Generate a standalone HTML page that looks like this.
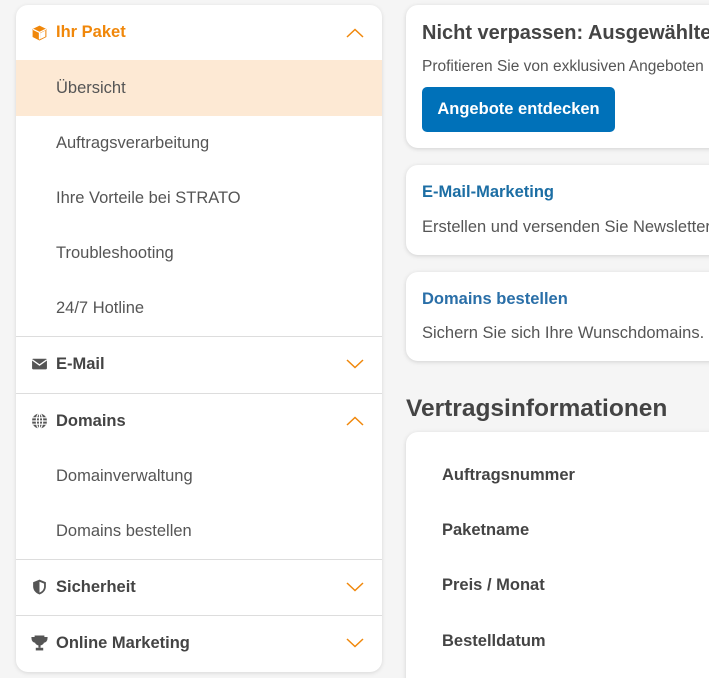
<!DOCTYPE html>
<html><head><meta charset="utf-8"><style>
*{box-sizing:border-box;margin:0;padding:0}
html,body{width:709px;height:678px;overflow:hidden}
body{background:#f5f5f5;font-family:"Liberation Sans",sans-serif;color:#444;position:relative}
#wrap{position:absolute;left:0;top:0;width:709px;height:678px;overflow:hidden}
.side{position:absolute;left:16px;top:5px;width:366px;height:667px;background:#fff;border-radius:12px;box-shadow:0 1px 4px rgba(0,0,0,.12);overflow:hidden}
.row{position:absolute;left:0;width:366px;font-size:16.5px;display:flex;align-items:center}
.h{font-weight:bold;color:#444;height:56px}
.sub{padding-left:40px;height:55px;color:#555}
.ic{position:absolute;left:15px;top:50%;transform:translateY(-50%);width:17px;height:17px}
.h span{margin-left:40px}
.chev{position:absolute;right:18px;top:50%;width:18px;height:10px;transform:translateY(-50%)}
.div{position:absolute;left:0;width:366px;height:1px;background:#ddd}
.card{position:absolute;left:406px;width:320px;background:#fff;border-radius:12px;box-shadow:0 1px 5px rgba(0,0,0,.15)}
.t{position:absolute;left:16px;white-space:nowrap}
</style></head><body><div id="wrap">
<div class="side">
 <div class="row h" style="top:0;height:55px;color:#f0870a">
  <svg class="ic" viewBox="0 0 16 16"><path d="M8 1 L14.5 4.2 V11.8 L8 15 L1.5 11.8 V4.2Z" fill="#f0870a"/><path d="M8 7.5 V14 M2 4.5 L8 7.5 L14 4.5" stroke="#fff" stroke-width="1.2" fill="none"/><path d="M8.6 8.2 L13.5 5.8 V11.4 L8.6 13.8Z" fill="#fff"/></svg>
  <span>Ihr Paket</span>
  <svg class="chev" viewBox="0 0 18 10"><path d="M1 9 L9 1.5 L17 9" stroke="#f0870a" stroke-width="1.5" fill="none"/></svg>
 </div>
 <div class="row sub" style="top:55px;height:56px;background:#fde9d4">Übersicht</div>
 <div class="row sub" style="top:111px">Auftragsverarbeitung</div>
 <div class="row sub" style="top:166px">Ihre Vorteile bei STRATO</div>
 <div class="row sub" style="top:221px">Troubleshooting</div>
 <div class="row sub" style="top:276px">24/7 Hotline</div>
 <div class="div" style="top:331px"></div>
 <div class="row h" style="top:331px">
  <svg class="ic" viewBox="0 0 16 16"><rect x="1" y="3" width="14" height="10" rx="1" fill="#555"/><path d="M1 4 L8 9 L15 4" stroke="#fff" stroke-width="1.3" fill="none"/></svg>
  <span>E-Mail</span>
  <svg class="chev" viewBox="0 0 18 10"><path d="M1 1 L9 8.5 L17 1" stroke="#f0870a" stroke-width="1.5" fill="none"/></svg>
 </div>
 <div class="div" style="top:388px"></div>
 <div class="row h" style="top:388px">
  <svg class="ic" viewBox="0 0 16 16"><circle cx="8" cy="8" r="7" fill="#555"/><path d="M1 8 H15 M1.8 5 H14.2 M1.8 11 H14.2 M8 1 V15" stroke="#fff" stroke-width="1.1"/><ellipse cx="8" cy="8" rx="3" ry="7" stroke="#fff" stroke-width="1.1" fill="none"/></svg>
  <span>Domains</span>
  <svg class="chev" viewBox="0 0 18 10"><path d="M1 9 L9 1.5 L17 9" stroke="#f0870a" stroke-width="1.5" fill="none"/></svg>
 </div>
 <div class="row sub" style="top:444px">Domainverwaltung</div>
 <div class="row sub" style="top:499px">Domains bestellen</div>
 <div class="div" style="top:554px"></div>
 <div class="row h" style="top:554px">
  <svg class="ic" viewBox="0 0 16 16"><path d="M8 1 L14 3.5 V7.5 C14 11 11.5 13.8 8 15 C4.5 13.8 2 11 2 7.5 V3.5Z" fill="#555"/><path d="M8 3 L12.3 4.8 V7.5 C12.3 10 10.7 12.2 8 13.2Z" fill="#fff"/></svg>
  <span>Sicherheit</span>
  <svg class="chev" viewBox="0 0 18 10"><path d="M1 1 L9 8.5 L17 1" stroke="#f0870a" stroke-width="1.5" fill="none"/></svg>
 </div>
 <div class="div" style="top:610px"></div>
 <div class="row h" style="top:610px">
  <svg class="ic" viewBox="0 0 16 16"><path d="M4 1.5 H12 V6 C12 8.5 10 9.8 8 9.8 C6 9.8 4 8.5 4 6Z M4 3 H1 C1 6 2.5 7 4.5 7.3 M12 3 H15 C15 6 13.5 7 11.5 7.3" fill="#555" stroke="#555" stroke-width="1.2"/><rect x="7" y="9.5" width="2" height="3" fill="#555"/><rect x="4.5" y="12.5" width="7" height="2.5" fill="#555"/></svg>
  <span>Online Marketing</span>
  <svg class="chev" viewBox="0 0 18 10"><path d="M1 1 L9 8.5 L17 1" stroke="#f0870a" stroke-width="1.5" fill="none"/></svg>
 </div>
</div>

<div class="card" style="top:5px;height:143px">
 <div class="t" style="top:17px;font-size:20px;font-weight:bold;color:#444">Nicht verpassen: Ausgewählte Angebote</div>
 <div class="t" style="top:53px;font-size:15.5px;color:#555">Profitieren Sie von exklusiven Angeboten</div>
 <div style="position:absolute;left:16px;top:82px;width:193px;height:45px;background:#0071b9;border-radius:5px;color:#fff;font-weight:bold;font-size:16.5px;line-height:45px;text-align:center">Angebote entdecken</div>
</div>
<div class="card" style="top:165px;height:90px">
 <div class="t" style="top:18px;font-size:16.5px;font-weight:bold;color:#1c6ea4">E-Mail-Marketing</div>
 <div class="t" style="top:53px;font-size:16.5px;color:#555">Erstellen und versenden Sie Newsletter</div>
</div>
<div class="card" style="top:272px;height:89px">
 <div class="t" style="top:18px;font-size:16.5px;font-weight:bold;color:#2a6fa8">Domains bestellen</div>
 <div class="t" style="top:52px;font-size:16.5px;color:#555">Sichern Sie sich Ihre Wunschdomains.</div>
</div>
<div style="position:absolute;left:406px;top:395px;font-size:24.5px;font-weight:bold;color:#444;white-space:nowrap">Vertragsinformationen</div>
<div class="card" style="top:432px;height:260px">
 <div class="t" style="left:36px;top:34px;font-size:16.5px;font-weight:bold">Auftragsnummer</div>
 <div class="t" style="left:36px;top:89px;font-size:16.5px;font-weight:bold">Paketname</div>
 <div class="t" style="left:36px;top:144px;font-size:16.5px;font-weight:bold">Preis / Monat</div>
 <div class="t" style="left:36px;top:200px;font-size:16.5px;font-weight:bold">Bestelldatum</div>
</div>
</div></body></html>
